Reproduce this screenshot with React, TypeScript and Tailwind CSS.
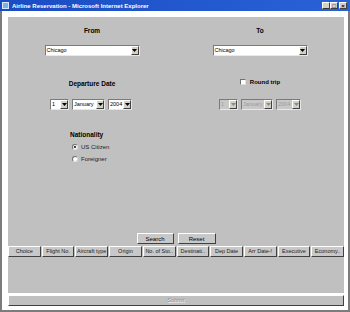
import React from 'react';

const font = { fontFamily: '"Liberation Sans", Arial, sans-serif' };

const Arrow = ({ disabled }: { disabled?: boolean }) => (
  <span className="w-[8px] h-full bg-[#d4d0c8] border-t border-l border-t-white border-l-white border-b border-r border-b-[#404040] border-r-[#404040] flex items-center justify-center shrink-0">
    <svg width="5" height="3" viewBox="0 0 5 3">
      <path d="M0 0h5L2.5 3z" fill={disabled ? '#8a8a8a' : '#000'} />
    </svg>
  </span>
);

const Select = ({ value, w, disabled }: { value: string; w: string; disabled?: boolean }) => (
  <div
    className={`${w} h-[11px] flex items-stretch border border-t-[#7a7a7a] border-l-[#7a7a7a] border-b-[#e8e8e8] border-r-[#e8e8e8] ${disabled ? 'bg-[#c8c8c8] text-[#9a9a9a]' : 'bg-white text-black'}`}
  >
    <span className="flex-1 text-[5.5px] leading-[9px] pl-[1px] overflow-hidden whitespace-nowrap">{value}</span>
    <Arrow disabled={disabled} />
  </div>
);

const Radio = ({ checked, label }: { checked?: boolean; label: string }) => (
  <div className="flex items-center h-[12px]">
    <span className="w-[6px] h-[6px] rounded-full bg-white border border-t-[#707070] border-l-[#707070] border-b-[#e0e0e0] border-r-[#e0e0e0] flex items-center justify-center">
      {checked && <span className="w-[2px] h-[2px] rounded-full bg-black" />}
    </span>
    <span className="ml-[3px] text-[6px] text-[#222]">{label}</span>
  </div>
);

const cols = ['Choice', 'Flight No.', 'Aircraft type', 'Origin', 'No. of Sto..', 'Destinati..', 'Dep Date', 'Arr Date-!', 'Executive', 'Economy..'];

const WinBtn = ({ children }: { children: React.ReactNode }) => (
  <span className="w-[8px] h-[7px] bg-[#d4d0c8] border-t border-l border-t-white border-l-white border-b border-r border-b-[#404040] border-r-[#404040] flex items-center justify-center text-[6px] leading-none font-bold text-black">
    {children}
  </span>
);

export default function App() {
  return (
    <div className="w-[350px] h-[312px] bg-white flex flex-col overflow-hidden" style={font}>
      {/* title bar */}
      <div className="h-[11px] bg-gradient-to-r from-[#1a4cc4] to-[#2a62d6] flex items-center px-[2px] shrink-0">
        <span className="w-[7px] h-[7px] bg-[#7fb0e8] border border-[#d8e8ff] mr-[3px]" />
        <span className="text-white font-bold text-[6px] leading-none">Airline Reservation - Microsoft Internet Explorer</span>
        <div className="ml-auto flex gap-0 mr-[1px]">
          <WinBtn>_</WinBtn>
          <WinBtn>□</WinBtn>
          <span className="ml-[1px]"><WinBtn>×</WinBtn></span>
        </div>
      </div>

      {/* window body */}
      <div className="flex-1 flex flex-col border-l-[2px] border-r-[2px] border-b-[2px] border-[#7c7c7c] pl-[6px] pr-[4px] pt-[6px]">
        <div className="bg-[#c0c0c0] flex flex-col">
          {/* form */}
          <div className="grid grid-cols-2 pt-[10px]">
            <div className="text-center font-bold text-[6.5px] leading-[8px]">From</div>
            <div className="text-center font-bold text-[6.5px] leading-[8px]">To</div>
          </div>
          <div className="grid grid-cols-2 mt-[10px]">
            <div className="flex justify-center"><Select value="Chicago" w="w-[95px]" /></div>
            <div className="flex justify-center"><Select value="Chicago" w="w-[95px]" /></div>
          </div>
          <div className="grid grid-cols-2 mt-[20px] h-[10px] items-center">
            <div className="text-center font-bold text-[6.5px] leading-[8px] mt-[4px]">Departure Date</div>
            <div className="flex justify-center items-center">
              <span className="w-[6px] h-[6px] bg-white border border-t-[#707070] border-l-[#707070] border-b-[#e0e0e0] border-r-[#e0e0e0]" />
              <span className="ml-[4px] font-bold text-[6px]">Round trip</span>
            </div>
          </div>
          <div className="grid grid-cols-2 mt-[13px]">
            <div className="flex justify-center gap-[3px] pr-[2px]">
              <Select value="1" w="w-[19px]" />
              <Select value="January" w="w-[33px]" />
              <Select value="2004" w="w-[24px]" />
            </div>
            <div className="flex justify-center gap-[3px]">
              <Select value="1" w="w-[19px]" disabled />
              <Select value="January" w="w-[32px]" disabled />
              <Select value="2004" w="w-[25px]" disabled />
            </div>
          </div>
          <div className="pl-[62px] mt-[21px]">
            <div className="font-bold text-[6.5px] leading-[8px]">Nationality</div>
            <div className="pl-[2px] mt-[2px]">
              <Radio checked label="US Citizen" />
              <Radio label="Foreigner" />
            </div>
          </div>

          {/* buttons */}
          <div className="flex justify-center gap-[4px] mt-[68px]">
            <button className="w-[37px] h-[11px] bg-[#c8c8c8] border border-t-white border-l-white border-b-[#404040] border-r-[#404040] text-[6px] leading-none">Search</button>
            <button className="w-[38px] h-[11px] bg-[#c8c8c8] border border-t-white border-l-white border-b-[#404040] border-r-[#404040] text-[6px] leading-none">Reset</button>
          </div>

          {/* table */}
          <div className="grid grid-cols-10 gap-x-[1px] mt-[2px]">
            {cols.map((c) => (
              <div
                key={c}
                className="h-[11px] bg-[#c8c8c8] border border-t-white border-l-white border-b-[#404040] border-r-[#404040] text-[5.5px] leading-[9px] text-center overflow-hidden whitespace-nowrap text-[#222]"
              >
                {c}
              </div>
            ))}
          </div>
          <div className="h-[36px]" />
        </div>

        {/* submit */}
        <div className="mt-[2px] h-[11px] bg-[#c0c0c0] border border-t-white border-l-white border-b-[#404040] border-r-[#404040] flex items-center justify-center">
          <span className="text-[5.5px] text-[#8e8e8e] [text-shadow:0.5px_0.5px_0_#fff]">Submit</span>
        </div>
      </div>
    </div>
  );
}
